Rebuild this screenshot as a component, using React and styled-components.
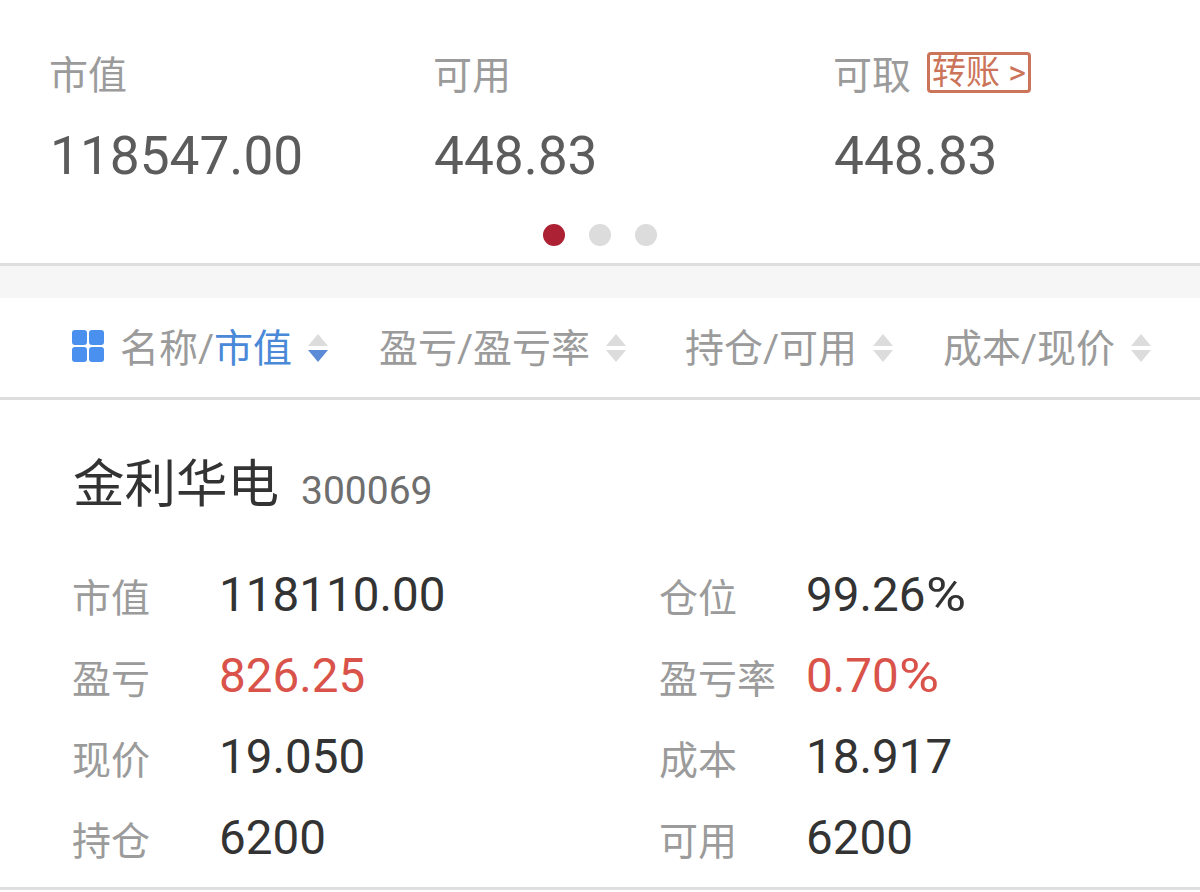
import React from 'react'
import styled, { createGlobalStyle } from 'styled-components';

const GlobalStyle = createGlobalStyle`
  html, body {
    margin: 0;
    padding: 0;
    background: #fff;
    font-family: Roboto, "Noto Sans CJK SC", sans-serif;
  }
`;

const assets = [
  { label: '市值', value: '118547.00', width: 384 },
  { label: '可用', value: '448.83', width: 400 },
  { label: '可取', value: '448.83', width: 330, transfer: true },
];

const sortCols = [
  { left: '盈亏/盈亏率', width: 306 },
  { left: '持仓/可用', width: 258 },
  { left: '成本/现价', width: 220 },
];

const rows = [
  [{ k: '市值', v: '118110.00' }, { k: '仓位', v: '99.26', pct: true }],
  [{ k: '盈亏', v: '826.25', red: true }, { k: '盈亏率', v: '0.70', red: true, pct: true }],
  [{ k: '现价', v: '19.050' }, { k: '成本', v: '18.917' }],
  [{ k: '持仓', v: '6200' }, { k: '可用', v: '6200' }],
];

const SortArrows = ({ active }) => (
  <Arrows width="20" height="32" viewBox="0 0 20 32">
    <path d="M10 2 L20 14 L0 14 Z" fill="#dcdcdc" />
    <path d="M0 18 L20 18 L10 30 Z" fill={active ? '#5b8bd6' : '#dcdcdc'} />
  </Arrows>
);

const App = () => {
  return (
    <Page>
      <GlobalStyle />
      <AssetRow>
        {assets.map((a) => (
          <AssetCol key={a.label + a.width} $width={a.width}>
            <AssetLabel>
              {a.label}
              {a.transfer && <TransferTag>转账 &gt;</TransferTag>}
            </AssetLabel>
            <AssetValue>{a.value}</AssetValue>
          </AssetCol>
        ))}
      </AssetRow>
      <Dots>
        <Dot $active />
        <Dot />
        <Dot />
      </Dots>
      <Band />
      <SortBar>
        <GridIcon width="32" height="32" viewBox="0 0 32 32">
          <rect x="0" y="0" width="15" height="15" rx="3" fill="#4a90ee" />
          <rect x="17" y="0" width="15" height="15" rx="3" fill="#4a90ee" />
          <rect x="0" y="17" width="15" height="15" rx="3" fill="#4a90ee" />
          <rect x="17" y="17" width="15" height="15" rx="3" fill="#4a90ee" />
        </GridIcon>
        <SortCol $width={259}>
          <SortText>名称/<ActiveText>市值</ActiveText></SortText>
          <SortArrows active />
        </SortCol>
        {sortCols.map((c) => (
          <SortCol key={c.left} $width={c.width}>
            <SortText>{c.left}</SortText>
            <SortArrows />
          </SortCol>
        ))}
      </SortBar>
      <Holding>
        <StockHead>
          <StockName>金利华电</StockName>
          <StockCode>300069</StockCode>
        </StockHead>
        <Grid>
          {rows.map((row) => (
            <Row key={row[0].k}>
              {row.map((cell) => (
                <Cell key={cell.k}>
                  <CellKey>{cell.k}</CellKey>
                  <CellValue $red={cell.red}>
                    {cell.v}
                    {cell.pct && <Percent>%</Percent>}
                  </CellValue>
                </Cell>
              ))}
            </Row>
          ))}
        </Grid>
      </Holding>
    </Page>
  )
}

const Page = styled.div`
  width: 1200px;
  height: 892px;
  overflow: hidden;
  background: #fff;
`;

const AssetRow = styled.div`
  display: flex;
  padding: 48px 0 0 50px;
`;

const AssetCol = styled.div`
  width: ${({ $width }) => $width}px;
  flex: none;
`;

const AssetLabel = styled.div`
  display: flex;
  align-items: center;
  height: 48px;
  margin-left: -1px;
  font-size: 39px;
  color: #9b9b9b;
`;

const TransferTag = styled.span`
  box-sizing: border-box;
  margin: 0 0 0 16px;
  width: 104px;
  height: 41px;
  border: 3px solid #cb7459;
  border-radius: 4px;
  font-size: 34px;
  line-height: 35px;
  color: #cb7459;
  text-align: center;
  white-space: nowrap;
`;

const AssetValue = styled.div`
  margin-top: 30px;
  height: 60px;
  line-height: 60px;
  font-size: 53.2px;
  color: #5c5c5c;
`;

const Dots = styled.div`
  display: flex;
  justify-content: center;
  gap: 24px;
  margin-top: 38px;
  padding-bottom: 17px;
  border-bottom: 3px solid #dedede;
`;

const Dot = styled.span`
  width: 22px;
  height: 22px;
  border-radius: 50%;
  background: ${({ $active }) => ($active ? '#ac2133' : '#dcdcdc')};
`;

const Band = styled.div`
  height: 32px;
  background: #f6f6f6;
`;

const SortBar = styled.div`
  display: flex;
  align-items: center;
  height: 99px;
  padding-left: 72px;
  border-bottom: 3px solid #dedede;
`;

const GridIcon = styled.svg`
  flex: none;
  margin: 0 16px 3px 0;
`;

const SortCol = styled.div`
  display: flex;
  align-items: center;
  flex: none;
  width: ${({ $width }) => $width}px;
`;

const SortText = styled.span`
  margin-bottom: 5px;
  font-size: 39px;
  color: #9b9b9b;
  white-space: nowrap;
`;

const ActiveText = styled.span`
  color: #4a88d8;
`;

const Arrows = styled.svg`
  flex: none;
  margin-left: 16px;
`;

const Holding = styled.div`
  box-sizing: border-box;
  height: 490px;
  padding: 47px 0 0 72px;
  border-bottom: 3px solid #dedede;
`;

const StockHead = styled.div`
  display: flex;
  align-items: center;
  height: 64px;
  padding-left: 1px;
`;

const StockName = styled.span`
  font-size: 51.5px;
  color: #333;
`;

const StockCode = styled.span`
  margin: 24px 0 0 22px;
  font-size: 39px;
  color: #6e6e6e;
`;

const Grid = styled.div`
  margin-top: 43px;
`;

const Row = styled.div`
  display: flex;
  height: 81px;
`;

const Cell = styled.div`
  display: flex;
  align-items: center;
  flex: none;
  width: 587px;
`;

const CellKey = styled.span`
  width: 147px;
  font-size: 39px;
  color: #9b9b9b;
`;

const CellValue = styled.span`
  font-size: 47.6px;
  color: ${({ $red }) => ($red ? '#d9534a' : '#333')};
`;

const Percent = styled.span`
  display: inline-block;
  transform-origin: left center;
  transform: scaleX(1.15);
`;

export default App;
